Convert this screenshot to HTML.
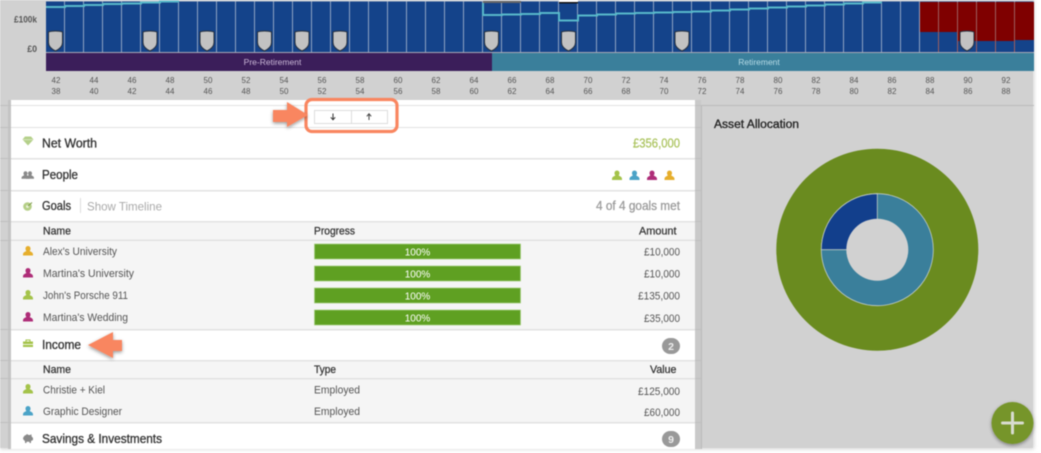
<!DOCTYPE html>
<html><head><meta charset="utf-8"><style>
html,body{margin:0;padding:0;background:#fff;width:1041px;height:453px;overflow:hidden}
svg{display:block;filter:blur(.45px)}
text{font-family:"Liberation Sans",sans-serif}
.ax{font-size:8px;fill:#555;text-anchor:middle}
.h{font-size:12.5px;fill:#333;stroke:#333;stroke-width:.3px}
.th{font-size:11px;fill:#333;stroke:#333;stroke-width:.25px}
.td{font-size:11px;fill:#555}
.r{text-anchor:end}
.pc{font-size:10px;fill:#fff;text-anchor:middle}
.bd{font-size:10.5px;font-weight:bold;fill:#eee;text-anchor:middle}
</style></head><body>
<svg width="1041" height="453" viewBox="0 0 1041 453" xmlns="http://www.w3.org/2000/svg">
<defs>
<pattern id="b" x="46" y="0" width="19" height="60" patternUnits="userSpaceOnUse"><rect width="19" height="60" fill="#14438a"/><rect x="18" width="1" height="60" fill="#8ea3c2"/></pattern>
<filter id="s" x="-30%" y="-30%" width="160%" height="160%"><feDropShadow dx="0" dy="1.5" stdDeviation="1.8" flood-color="#000" flood-opacity=".4"/></filter>
<filter id="e" x="-10%" y="-10%" width="120%" height="120%"><feGaussianBlur stdDeviation="2"/></filter>
<g id="sh"><path d="M-7 2.500C-3.500 1.200 3.500 1.200 7 2.500V13C7 17 3 20 0 21.500C-3 20-7 17-7 13Z" fill="#c2c2c2" stroke="#26303e" stroke-width="1"/></g>
<path id="p" d="M0-6a2.500 2.500 0 0 1 2.500 2.700c0 1-.5 1.700-.8 2.300c.8.8 3.300 1 3.300 3.500v1h-10v-1c0-2.500 2.500-2.700 3.300-3.500c-.3-.6-.8-1.300-.8-2.300A2.500 2.500 0 0 1 0-6Z"/>
</defs>
<rect x="0" y="0" width="1041" height="453" fill="#fff"/>
<rect x="0" y="0" width="1034" height="449" fill="#d1d1d1" filter="url(#e)"/>
<rect x="0" y="0" width="1033" height="448" fill="#d1d1d1"/>

<rect x="46" y="1" width="988" height="52" fill="url(#b)"/>
<rect x="920" y="2" width="114" height="51" fill="#7f0000"/>
<g fill="#14438a"><rect x="920" y="32" width="18" height="21"/><rect x="939" y="32" width="18" height="21"/><rect x="958" y="41" width="18" height="12"/><rect x="977" y="41" width="18" height="12"/><rect x="996" y="41" width="18" height="12"/><rect x="1015" y="40" width="19" height="13"/></g>
<g fill="#a88" opacity=".7"><rect x="938" y="2" width="1" height="51"/><rect x="957" y="2" width="1" height="51"/><rect x="976" y="2" width="1" height="51"/><rect x="995" y="2" width="1" height="51"/><rect x="1014" y="2" width="1" height="51"/></g>
<rect x="46" y="0" width="988" height="1.500" fill="#c8ccd2"/>
<rect x="483" y="1" width="38" height="2" fill="#666"/><rect x="559" y="0" width="19" height="3" fill="#fff"/><rect x="559" y="2" width="19" height="1.500" fill="#111"/>
<path d="M46 7H65V6H84V5H103V4H122V3.500H141V2.500H160V1.500H179" fill="none" stroke="#58b9ca" stroke-width="2"/>
<path d="M483 3V15H502V14.500H521V14H540V13H559V20.500H578V15.500H597V14.500H616V13.500H635V13H654V12.500H673V12H692V11.500H711V10.500H730V9.500H749V8.500H768V7.500H787V6.500H806V5.500H825V4.500H844V3.500H863V2.500H882" fill="none" stroke="#58b9ca" stroke-width="2"/>
<g><use href="#sh" x="55.500" y="29.500"/><use href="#sh" x="150" y="29.500"/><use href="#sh" x="207" y="29.500"/><use href="#sh" x="264.500" y="29.500"/><use href="#sh" x="302" y="29.500"/><use href="#sh" x="340" y="29.500"/><use href="#sh" x="491.500" y="29.500"/><use href="#sh" x="568.500" y="29.500"/><use href="#sh" x="682" y="29.500"/><use href="#sh" x="967" y="29.500"/></g>
<rect x="46" y="52" width="446" height="19" fill="#3b1e5a"/><rect x="492" y="52" width="542" height="19" fill="#3a7f9b"/>
<rect x="46" y="52" width="988" height="1" fill="#a9a9b5"/>
<text x="272.500" y="65" font-size="8.500" fill="#c9b7d6" text-anchor="middle">Pre-Retirement</text>
<text x="759" y="65" font-size="8.500" fill="#b6dbe6" text-anchor="middle">Retirement</text>
<text x="37" y="22.500" font-size="8.800" font-weight="bold" fill="#555" text-anchor="end" textLength="23" lengthAdjust="spacingAndGlyphs">£100k</text>
<text x="37" y="52" font-size="8.800" font-weight="bold" fill="#555" text-anchor="end">£0</text>

<g class="ax">
<text class="ax" x="56" y="83">42</text><text class="ax" x="56" y="94">38</text>
<text class="ax" x="94" y="83">44</text><text class="ax" x="94" y="94">40</text>
<text class="ax" x="132" y="83">46</text><text class="ax" x="132" y="94">42</text>
<text class="ax" x="170" y="83">48</text><text class="ax" x="170" y="94">44</text>
<text class="ax" x="208" y="83">50</text><text class="ax" x="208" y="94">46</text>
<text class="ax" x="246" y="83">52</text><text class="ax" x="246" y="94">48</text>
<text class="ax" x="284" y="83">54</text><text class="ax" x="284" y="94">50</text>
<text class="ax" x="322" y="83">56</text><text class="ax" x="322" y="94">52</text>
<text class="ax" x="360" y="83">58</text><text class="ax" x="360" y="94">54</text>
<text class="ax" x="398" y="83">60</text><text class="ax" x="398" y="94">56</text>
<text class="ax" x="436" y="83">62</text><text class="ax" x="436" y="94">58</text>
<text class="ax" x="474" y="83">64</text><text class="ax" x="474" y="94">60</text>
<text class="ax" x="512" y="83">66</text><text class="ax" x="512" y="94">62</text>
<text class="ax" x="550" y="83">68</text><text class="ax" x="550" y="94">64</text>
<text class="ax" x="588" y="83">70</text><text class="ax" x="588" y="94">66</text>
<text class="ax" x="626" y="83">72</text><text class="ax" x="626" y="94">68</text>
<text class="ax" x="664" y="83">74</text><text class="ax" x="664" y="94">70</text>
<text class="ax" x="702" y="83">76</text><text class="ax" x="702" y="94">72</text>
<text class="ax" x="740" y="83">78</text><text class="ax" x="740" y="94">74</text>
<text class="ax" x="778" y="83">80</text><text class="ax" x="778" y="94">76</text>
<text class="ax" x="816" y="83">82</text><text class="ax" x="816" y="94">78</text>
<text class="ax" x="854" y="83">84</text><text class="ax" x="854" y="94">80</text>
<text class="ax" x="892" y="83">86</text><text class="ax" x="892" y="94">82</text>
<text class="ax" x="930" y="83">88</text><text class="ax" x="930" y="94">84</text>
<text class="ax" x="968" y="83">90</text><text class="ax" x="968" y="94">86</text>
<text class="ax" x="1006" y="83">92</text><text class="ax" x="1006" y="94">88</text>
</g>

<!-- panel -->
<rect x="701" y="105" width="333" height="1" fill="#bbb"/>
<rect x="701" y="105" width="1" height="344" fill="#bbb"/>
<rect x="695" y="100" width="6" height="349" fill="#c9c9c9"/>
<rect x="8" y="100" width="3" height="349" fill="#c4c4c4"/>
<rect x="11" y="100" width="684" height="349" fill="#fff"/>
<rect x="11" y="222" width="684" height="107" fill="#f5f5f5"/>
<rect x="11" y="361" width="684" height="61" fill="#f5f5f5"/>
<g fill="#e2e2e2">
<rect x="11" y="105" width="684" height="1"/>
<rect x="11" y="127" width="684" height="1"/>
<rect x="11" y="158" width="684" height="1.500"/>
<rect x="11" y="190" width="684" height="1.500"/>
<rect x="11" y="221" width="684" height="1.500"/>
<rect x="11" y="239.500" width="684" height="1.500"/>
<rect x="11" y="329" width="684" height="1.500"/>
<rect x="11" y="360" width="684" height="1.500"/>
<rect x="11" y="378" width="684" height="1.500"/>
<rect x="11" y="422" width="684" height="1.500"/>
</g>
<g fill="#bfbfbf">
<rect x="0" y="105" width="11" height="1"/><rect x="695" y="105" width="6" height="1"/>
<rect x="0" y="127" width="11" height="1"/><rect x="695" y="127" width="6" height="1"/>
<rect x="0" y="158" width="11" height="1"/><rect x="695" y="158" width="6" height="1"/>
<rect x="0" y="190" width="11" height="1"/><rect x="695" y="190" width="6" height="1"/>
<rect x="0" y="221" width="11" height="1"/><rect x="695" y="221" width="6" height="1"/>
<rect x="0" y="240" width="11" height="1"/><rect x="695" y="240" width="6" height="1"/>
<rect x="0" y="329" width="11" height="1"/><rect x="695" y="329" width="6" height="1"/>
<rect x="0" y="360" width="11" height="1"/><rect x="695" y="360" width="6" height="1"/>
<rect x="0" y="378" width="11" height="1"/><rect x="695" y="378" width="6" height="1"/>
<rect x="0" y="422" width="11" height="1"/><rect x="695" y="422" width="6" height="1"/>
</g>

<!-- buttons -->
<rect x="314.500" y="110.500" width="73" height="13" fill="#fff" stroke="#ddd"/><rect x="351" y="110" width="1" height="14" fill="#ddd"/>
<path d="M333 113.500V119.500M330.800 117.300L333 119.800L335.200 117.300" fill="none" stroke="#333" stroke-width="1"/>
<path d="M369 120V114M366.800 116.300L369 113.800L371.200 116.300" fill="none" stroke="#444" stroke-width="1"/>
<rect x="306" y="99.500" width="91" height="32" rx="6" fill="none" stroke="#f98660" stroke-width="3.200"/>
<path d="M273 110H287V102L308 115L287 127V122H273Z" fill="#f98660" filter="url(#s)"/>
<path d="M88 345L113 332V340H122V351H113V358Z" fill="#f98660" filter="url(#s)"/>

<!-- section titles -->
<text class="h" x="42" y="147.500" textLength="55" lengthAdjust="spacingAndGlyphs">Net Worth</text>
<text class="h" x="42" y="179" textLength="36" lengthAdjust="spacingAndGlyphs">People</text>
<text class="h" x="42" y="210" textLength="29" lengthAdjust="spacingAndGlyphs">Goals</text>
<rect x="80" y="198" width="1" height="15" fill="#ddd"/>
<text x="87" y="210.500" font-size="12" fill="#aaa" textLength="75" lengthAdjust="spacingAndGlyphs">Show Timeline</text>
<text class="h" x="42" y="349" textLength="39" lengthAdjust="spacingAndGlyphs">Income</text>
<text class="h" x="42" y="443" textLength="120" lengthAdjust="spacingAndGlyphs">Savings &amp; Investments</text>
<text x="633" y="147.500" font-size="12.500" fill="#a9c25a" stroke="#a9c25a" stroke-width=".2" textLength="47" lengthAdjust="spacingAndGlyphs">£356,000</text>
<text x="596" y="210" font-size="12.500" fill="#999" stroke="#999" stroke-width=".25" textLength="84" lengthAdjust="spacingAndGlyphs">4 of 4 goals met</text>

<!-- section icons -->
<path d="M22.500 139.500L25 136.500H31L33.500 139.500L28 145.500Z" fill="#b4d08a"/><path d="M23 139.700H33" stroke="#e8f0d8" stroke-width=".6" fill="none"/>
<g fill="#8a8a8a"><use href="#p" transform="translate(25.500 176) scale(.8)"/><use href="#p" transform="translate(30 176) scale(.8)"/></g>
<circle cx="27.500" cy="206.500" r="4.300" fill="#b5cf87"/><circle cx="27.500" cy="206.500" r="1.400" fill="#eef4e0"/><path d="M28 206L32 202.500" stroke="#7e9a4a" stroke-width="1"/>
<path d="M23 341.500H33V347H23Z" fill="#a4c34a"/><path d="M26 341.500V340H30V341.500" fill="none" stroke="#a4c34a" stroke-width="1"/><rect x="23" y="344" width="10" height=".8" fill="#fff"/>
<path d="M23 438.500C23.500 436.500 25 435 26 435L27 434L28.500 435H30L31.500 434.200L31.500 436.300L33 438L33 440L31 441V443H29.500V441.700H26.500V443H25V441C24 440.500 23.500 439.700 23 438.500Z" fill="#8a8a8a"/>

<g fill="#a4c34a"><use href="#p" transform="translate(617 176.500)"/></g>
<g fill="#4ba3c7"><use href="#p" transform="translate(634.500 176.500)"/></g>
<g fill="#ae2d78"><use href="#p" transform="translate(652 176.500)"/></g>
<g fill="#e6ae2c"><use href="#p" transform="translate(669.500 176.500)"/></g>

<!-- goals -->
<text class="th" x="43" y="234.500" textLength="28" lengthAdjust="spacingAndGlyphs">Name</text><text class="th" x="314" y="234.500" textLength="41" lengthAdjust="spacingAndGlyphs">Progress</text><text class="th" x="639" y="234.500" textLength="37.500" lengthAdjust="spacingAndGlyphs">Amount</text>
<use href="#p" fill="#e6ae2c" transform="translate(28 252)"/><text class="td" x="43" y="255" textLength="74" lengthAdjust="spacingAndGlyphs">Alex's University</text>
<use href="#p" fill="#ae2d78" transform="translate(28 274)"/><text class="td" x="43" y="277" textLength="91" lengthAdjust="spacingAndGlyphs">Martina's University</text>
<use href="#p" fill="#a4c34a" transform="translate(28 296)"/><text class="td" x="43" y="299" textLength="85" lengthAdjust="spacingAndGlyphs">John's Porsche 911</text>
<use href="#p" fill="#ae2d78" transform="translate(28 318)"/><text class="td" x="43" y="321" textLength="85" lengthAdjust="spacingAndGlyphs">Martina's Wedding</text>
<g fill="#5fa022" stroke="#a2cc7a" stroke-width=".7"><rect x="314.500" y="244" width="206" height="15"/><rect x="314.500" y="266" width="206" height="15"/><rect x="314.500" y="288" width="206" height="15"/><rect x="314.500" y="310" width="206" height="15"/></g>
<text class="pc" x="417.500" y="255.500">100%</text><text class="pc" x="417.500" y="277.500">100%</text><text class="pc" x="417.500" y="299.500">100%</text><text class="pc" x="417.500" y="321.500">100%</text>
<text class="td" x="644" y="255.500" textLength="36" lengthAdjust="spacingAndGlyphs">£10,000</text><text class="td" x="644" y="277.500" textLength="36" lengthAdjust="spacingAndGlyphs">£10,000</text><text class="td" x="638" y="299.500" textLength="42" lengthAdjust="spacingAndGlyphs">£135,000</text><text class="td" x="644" y="322" textLength="36" lengthAdjust="spacingAndGlyphs">£35,000</text>

<!-- income -->
<rect x="662" y="338" width="18" height="16" rx="8" fill="#999"/><text class="bd" x="671" y="350">2</text>
<text class="th" x="43" y="373" textLength="28" lengthAdjust="spacingAndGlyphs">Name</text><text class="th" x="314" y="373" textLength="22" lengthAdjust="spacingAndGlyphs">Type</text><text class="th" x="650" y="373" textLength="26.500" lengthAdjust="spacingAndGlyphs">Value</text>
<use href="#p" fill="#a4c34a" transform="translate(28 390)"/><text class="td" x="43" y="393.500" textLength="62" lengthAdjust="spacingAndGlyphs">Christie + Kiel</text>
<use href="#p" fill="#4ba3c7" transform="translate(28 412)"/><text class="td" x="43" y="415" textLength="79" lengthAdjust="spacingAndGlyphs">Graphic Designer</text>
<text class="td" x="314" y="393.500" textLength="46" lengthAdjust="spacingAndGlyphs">Employed</text><text class="td" x="314" y="415" textLength="46" lengthAdjust="spacingAndGlyphs">Employed</text>
<text class="td" x="638" y="395" textLength="42" lengthAdjust="spacingAndGlyphs">£125,000</text><text class="td" x="644" y="416" textLength="36" lengthAdjust="spacingAndGlyphs">£60,000</text>
<rect x="662" y="431" width="18" height="16" rx="8" fill="#999"/><text class="bd" x="671" y="443">9</text>

<!-- allocation -->
<text x="714" y="128" font-size="11.500" fill="#222" stroke="#222" stroke-width=".3" textLength="85" lengthAdjust="spacingAndGlyphs">Asset Allocation</text>
<circle cx="877.300" cy="249.700" r="101" fill="#6a8b1f"/>
<circle cx="877.300" cy="249.700" r="56" fill="#3a7f9b" stroke="#c2ccc4" stroke-width=".8"/>
<path d="M877.300 249.700V193.700A56 56 0 0 0 821.300 249.700Z" fill="#123f8c" stroke="#c2ccc4" stroke-width=".8"/>
<circle cx="877.300" cy="249.700" r="31" fill="#d1d1d1"/>

<!-- fab -->
<circle cx="1012.500" cy="423" r="21" fill="#76952a" filter="url(#s)"/>
<path d="M1002.500 423H1022.500M1012.500 413V433" stroke="#d8dcd0" stroke-width="3" stroke-linecap="round"/>
</svg>
</body></html>
